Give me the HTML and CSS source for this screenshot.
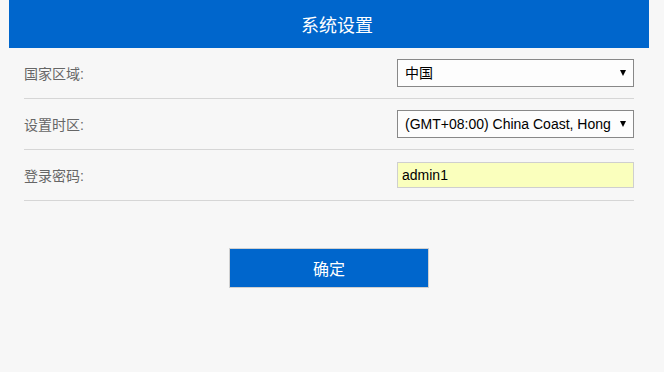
FILE: index.html
```html
<!DOCTYPE html>
<html lang="zh-CN">
<head>
<meta charset="utf-8">
<title>系统设置</title>
<link rel="stylesheet" href="styles.css">
</head>
<body>
<div class="page">
  <div class="header">系统设置</div>
  <div class="form">
    <div class="row">
      <span class="label">国家区域:</span>
      <div class="select-wrap">
        <select class="control select">
          <option>中国</option>
        </select>
      </div>
    </div>
    <div class="row">
      <span class="label">设置时区:</span>
      <div class="select-wrap">
        <select class="control select">
          <option>(GMT+08:00) China Coast, Hong Kong, Perth, Singapore, Taipei</option>
        </select>
      </div>
    </div>
    <div class="row">
      <span class="label">登录密码:</span>
      <input class="control input" type="text" value="admin1">
    </div>
  </div>
  <div class="actions">
    <button class="btn" type="button">确定</button>
  </div>
</div>
</body>
</html>
```
FILE: styles.css
```css
html, body {
  margin: 0;
  padding: 0;
  background: #f7f7f7;
  font-family: "Liberation Sans", "Noto Sans CJK SC", sans-serif;
}
.page {
  margin-left: 9px;
  width: 640px;
}
.header {
  box-sizing: border-box;
  height: 48px;
  padding-left: 16px;
  background: #0066cc;
  color: #fff;
  font-size: 18px;
  display: flex;
  align-items: center;
  justify-content: center;
}
.form {
  padding: 0 15px;
}
.row {
  height: 50px;
  border-bottom: 1px solid #d6d6d6;
  display: flex;
  align-items: center;
  justify-content: space-between;
}
.label {
  font-size: 14px;
  color: #666;
}
.select-wrap {
  position: relative;
  width: 237px;
  height: 28px;
}
.select-wrap::after {
  content: "";
  position: absolute;
  right: 8px;
  top: 11px;
  width: 0;
  height: 0;
  border-left: 3.5px solid transparent;
  border-right: 3.5px solid transparent;
  border-top: 6px solid #000;
  pointer-events: none;
}
.control {
  box-sizing: border-box;
  width: 237px;
  margin: 0;
  font-family: "Liberation Sans", "Noto Sans CJK SC", sans-serif;
  font-size: 14px;
  color: #000;
  outline: none;
}
.select {
  -webkit-appearance: none;
  appearance: none;
  height: 28px;
  border: 1px solid #888;
  border-radius: 0;
  background: #fdfdfd;
  padding: 0 22px 0 7px;
}
.input {
  height: 26px;
  border: 1px solid #cfcfcf;
  background: #faffbd;
  padding: 0 4px;
}
.actions {
  display: flex;
  justify-content: center;
  padding-top: 47px;
}
.btn {
  box-sizing: border-box;
  width: 200px;
  height: 40px;
  border: 1px solid #d0d0d0;
  background: #0066cc;
  color: #fff;
  font-family: "Liberation Sans", "Noto Sans CJK SC", sans-serif;
  font-size: 16px;
  padding: 0;
  cursor: pointer;
}
```
